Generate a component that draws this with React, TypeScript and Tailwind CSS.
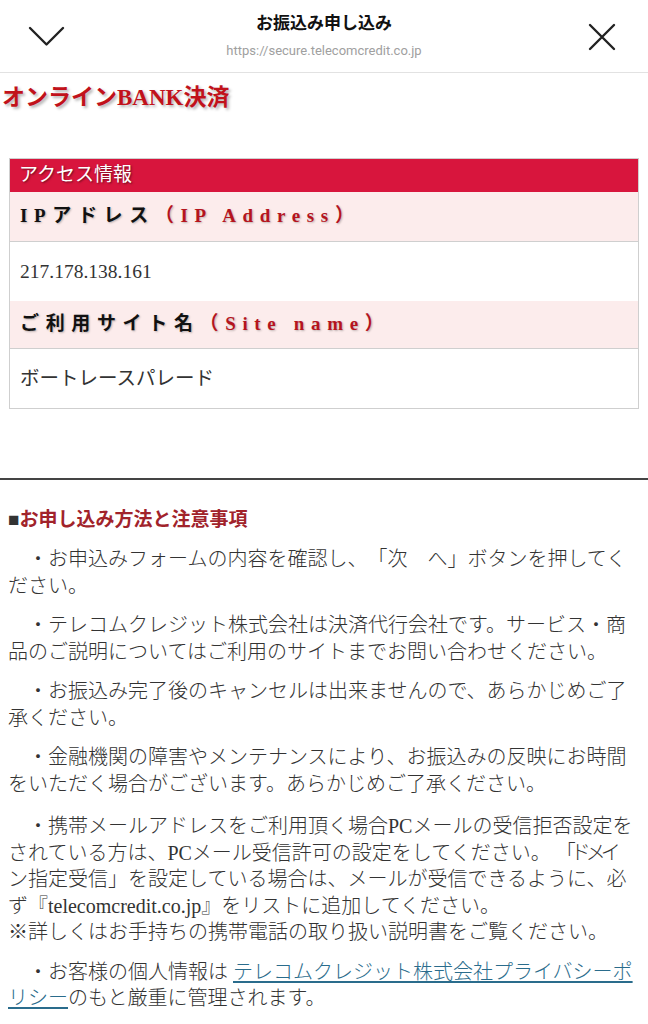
const serif = "font-['Liberation_Serif','Noto_Sans_CJK_JP',serif]";
const sp = "\u3000";

function Header() {
  return (
    <header className="relative h-[73px] border-b border-[#e2e2e2] bg-white">
      <svg className="absolute left-[28px] top-[26px] h-[22px] w-[37px]" viewBox="0 0 37 22" fill="none">
        <path d="M2 2 L18.5 18.5 L35 2" stroke="#222" strokeWidth="2.4" strokeLinecap="round" strokeLinejoin="round" />
      </svg>
      <svg className="absolute left-[588px] top-[23px] h-[28px] w-[28px]" viewBox="0 0 28 28" fill="none">
        <path d="M2 2 L26 26 M26 2 L2 26" stroke="#222" strokeWidth="2.4" strokeLinecap="round" />
      </svg>
      <div className="flex flex-col items-center pt-[10px] font-['Noto_Sans_CJK_JP',sans-serif]">
        <div className="text-[17px] font-bold leading-[24px] text-[#111]">お振込み申し込み</div>
        <div className="mt-[8px] font-['Roboto',sans-serif] text-[13px] leading-[18px] text-[#a0a0a0]">
          https://secure.telecomcredit.co.jp
        </div>
      </div>
    </header>
  );
}

function LabelRow({ jp, en, h }: { jp: string; en: string; h: string }) {
  return (
    <div className={`flex items-center border-b border-[#cfcfcf] bg-[#fcecec] px-[10px] ${h}`}>
      <span className="text-[19px] font-bold tracking-[0.35em] text-[#111] [text-shadow:1px_1px_2px_rgba(0,0,0,0.25)]">
        {jp}
        <span className="text-[#b5141e]">（{en}）</span>
      </span>
    </div>
  );
}

function ValueRow({ children, h }: { children: React.ReactNode; h: string }) {
  return (
    <div className={`flex items-center bg-white px-[10px] text-[19.5px] text-[#333] ${h}`}>{children}</div>
  );
}

const notes: React.ReactNode[] = [
  `${sp}・お申込みフォームの内容を確認し、「次${sp}へ」ボタンを押してください。`,
  `${sp}・テレコムクレジット株式会社は決済代行会社です。サービス・商品のご説明についてはご利用のサイトまでお問い合わせください。`,
  `${sp}・お振込み完了後のキャンセルは出来ませんので、あらかじめご了承ください。`,
  `${sp}・金融機関の障害やメンテナンスにより、お振込みの反映にお時間をいただく場合がございます。あらかじめご了承ください。`,
  <>
    {`${sp}・携帯メールアドレスをご利用頂く場合PCメールの受信拒否設定をされている方は、PCメール受信許可の設定をしてください。 `}
    <span className="whitespace-nowrap tracking-[-5px]">「ドメイ</span>
    <br />
    {"ン指定受信」を設定している場合は、メールが受信できるように、必ず『telecomcredit.co.jp』をリストに追加してください。"}
    <br />
    ※詳しくはお手持ちの携帯電話の取り扱い説明書をご覧ください。
  </>,
  <>
    {`${sp}・お客様の個人情報は `}
    <a href="#" className="text-[#2a6c8c] underline decoration-[1.5px] underline-offset-[2px]">
      テレコムクレジット株式会社プライバシーポリシー
    </a>
    のもと厳重に管理されます。
  </>,
];

export default function App() {
  return (
    <div className={`min-h-[1024px] bg-white ${serif} [text-spacing-trim:space-all]`}>
      <Header />

      <h1 className="ml-[2px] mt-[10px] text-[23px] font-bold leading-[30px] text-[#c1121b] [text-shadow:2px_2px_3px_rgba(0,0,0,0.3)]">
        オンラインBANK決済
      </h1>

      {/* Access info table */}
      <div className="mx-[9px] mt-[45px] border border-[#cfcfcf]">
        <div className="flex h-[33px] items-center bg-[#d8153d] px-[9px] text-[19px] text-white [text-shadow:1px_1px_2px_rgba(0,0,0,0.5)]">
          アクセス情報
        </div>
        <LabelRow jp="IPアドレス" en="IP Address" h="h-[50px]" />
        <ValueRow h="h-[59px]">217.178.138.161</ValueRow>
        <LabelRow jp="ご利用サイト名" en="Site name" h="h-[48px]" />
        <ValueRow h="h-[59px]">ボートレースパレード</ValueRow>
      </div>

      <div className="mt-[69px] border-t-2 border-[#444]" />

      {/* Notes */}
      <section className="px-[8px] pt-[26px]">
        <h2 className="text-[19px] font-bold leading-[28px] text-[#a1232b]">
          <span className="text-[#333]">■</span>お申し込み方法と注意事項
        </h2>
        <div className="mt-[12px] text-[20px] font-light leading-[26.5px] text-[#333]">
          {notes.map((n, i) => (
            <p key={i} className={i === 3 ? "mb-[16px]" : "mb-[13px]"}>
              {n}
            </p>
          ))}
        </div>
      </section>
    </div>
  );
}
